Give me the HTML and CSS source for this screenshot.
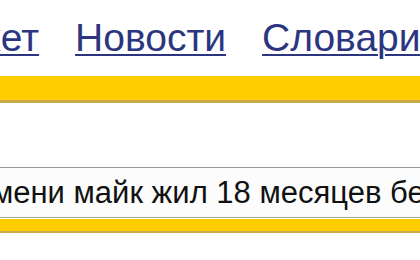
FILE: index.html
```html
<!DOCTYPE html>
<html lang="ru">
<head>
  <meta charset="UTF-8" />
  <title>Яндекс</title>
  <link rel="stylesheet" href="styles.css">
</head>
<body>
  <div class="tabs">
    <a href="#">Маркет</a>
    <a href="#">Новости</a>
    <a href="#">Словари</a>
  </div>
  <div class="bar"></div>
  <form class="search">
    <div class="field">
      <input type="text" value="времени майк жил 18 месяцев без головы" />
    </div>
    <div class="bar bar-low"></div>
  </form>
</body>
</html>
```

FILE: styles.css
```css
body {
  margin: 0;
  font-family: "Liberation Sans", Arial, sans-serif;
  background: #fff;
  overflow: hidden;
}
.tabs {
  display: flex;
  gap: 36px;
  margin-left: -93px;
  padding-top: 18px;
  height: 76px;
  box-sizing: border-box;
  white-space: nowrap;
}
.tabs a {
  font-size: 39px;
  line-height: 40px;
  color: #2b3580;
  text-decoration: underline;
  text-decoration-thickness: 2px;
  text-underline-offset: 3px;
}
.bar {
  height: 24px;
  background: #ffcc00;
  border-bottom: 3px solid #c9a84a;
}
.search {
  margin-top: 64px;
}
.field {
  margin-left: -70px;
  width: 900px;
  height: 51px;
  border: 1px solid #a8a8a8;
  border-top-color: #9a9a9a;
  box-sizing: border-box;
  background: #fcfcfc;
}
.field input {
  width: 100%;
  height: 100%;
  border: none;
  background: transparent;
  padding: 0 0 0 10px;
  box-sizing: border-box;
  font-family: "Liberation Sans", Arial, sans-serif;
  font-size: 31px;
  color: #111;
  outline: none;
}
.bar-low {
  height: 12px;
  margin-top: 1px;
  border-bottom-width: 2px;
}
```
